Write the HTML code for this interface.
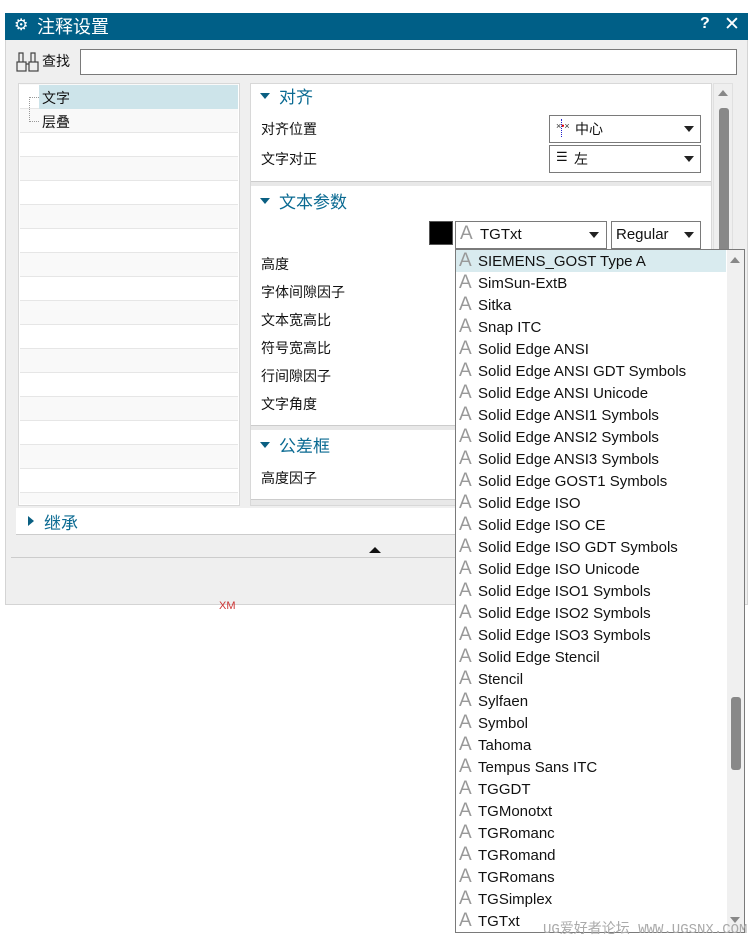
<!DOCTYPE html>
<html><head><meta charset="utf-8"><style>
*{margin:0;padding:0;box-sizing:border-box}
body{width:755px;height:940px;background:#fff;position:relative;overflow:hidden;font-family:"Liberation Sans","Noto Sans CJK SC",sans-serif;font-size:14px;color:#111}
.a{position:absolute}
.cn{font-family:"Noto Sans CJK SC",sans-serif}
.hd{color:#0a6a92;font-size:17px}
.tri{width:0;height:0;border-left:5px solid transparent;border-right:5px solid transparent;border-top:6px solid #0a5f82}
.dd{background:#fff;border:1px solid #7a7a7a}
.dt{width:0;height:0;border-left:5px solid transparent;border-right:5px solid transparent;border-top:6px solid #222}
.fi{position:absolute;left:458px;height:22px;line-height:22px;font-size:15px;color:#111;white-space:nowrap}
.fi b{font-weight:normal;color:#999;font-size:19px;display:inline-block;width:20px;padding-left:1px}
</style></head><body>
<div class="a" style="left:5px;top:13px;width:743px;height:592px;background:#efefef;border:1px solid #d4d4d4"></div>
<div class="a" style="left:5px;top:13px;width:743px;height:27px;background:#005f87"></div>
<div class="a" style="left:14px;top:15px;color:#fff;font-size:16px">⚙</div>
<div class="a cn" style="left:37px;top:13px;color:#fff;font-size:18px;line-height:26px">注释设置</div>
<div class="a" style="left:700px;top:15px;color:#fff;font-size:16px;font-weight:bold">?</div>
<div class="a" style="left:724px;top:13px;color:#fff;font-size:19px">✕</div>
<svg class="a" style="left:16px;top:50px" width="26" height="22" viewBox="0 0 26 22"><g fill="none" stroke="#444" stroke-width="1.2"><rect x="1" y="12" width="9" height="9"/><rect x="13" y="12" width="9" height="9"/><path d="M3 12V3h4v9M15 12V3h4v9M10 14h3"/></g></svg>
<div class="a cn" style="left:42px;top:51px;font-size:14px">查找</div>
<div class="a" style="left:80px;top:49px;width:657px;height:26px;background:#fff;border:1px solid #7a7a7a"></div>
<div class="a" style="left:18px;top:83px;width:222px;height:423px;background:#fff;border:1px solid #d8d8d8"></div>
<div class="a" style="left:20px;top:84px;width:218px;height:420px;background:repeating-linear-gradient(#fff 0 23px,#e6e6e6 23px 24px,#f9f9f9 24px 47px,#e6e6e6 47px 48px);background-position:0 1px"></div>
<div class="a" style="left:39px;top:85px;width:199px;height:24px;background:#cde4ea"></div>
<div class="a" style="left:29px;top:97px;width:1px;height:25px;border-left:1px dotted #999"></div>
<div class="a" style="left:29px;top:97px;width:10px;border-top:1px dotted #999"></div>
<div class="a" style="left:29px;top:121px;width:10px;border-top:1px dotted #999"></div>
<div class="a cn" style="left:42px;top:88px">文字</div>
<div class="a cn" style="left:42px;top:112px">层叠</div>
<div class="a" style="left:250px;top:83px;width:462px;height:423px;background:#e8e8e8;border:1px solid #d8d8d8"></div>
<div class="a" style="left:251px;top:84px;width:460px;height:98px;background:#fff;border-bottom:1px solid #ccc"></div>
<div class="a" style="left:251px;top:186px;width:460px;height:240px;background:#fff;border-bottom:1px solid #ccc"></div>
<div class="a" style="left:251px;top:430px;width:460px;height:70px;background:#fff;border-bottom:1px solid #ccc"></div>
<div class="a tri" style="left:260px;top:93px"></div><div class="a cn hd" style="left:279px;top:83px">对齐</div>
<div class="a tri" style="left:260px;top:198px"></div><div class="a cn hd" style="left:279px;top:188px">文本参数</div>
<div class="a tri" style="left:260px;top:442px"></div><div class="a cn hd" style="left:279px;top:432px">公差框</div>
<div class="a cn" style="left:261px;top:119px">对齐位置</div>
<div class="a cn" style="left:261px;top:149px">文字对正</div>
<div class="a cn" style="left:261px;top:254px">高度</div>
<div class="a cn" style="left:261px;top:282px">字体间隙因子</div>
<div class="a cn" style="left:261px;top:310px">文本宽高比</div>
<div class="a cn" style="left:261px;top:338px">符号宽高比</div>
<div class="a cn" style="left:261px;top:366px">行间隙因子</div>
<div class="a cn" style="left:261px;top:394px">文字角度</div>
<div class="a cn" style="left:261px;top:468px">高度因子</div>
<div class="a dd" style="left:549px;top:115px;width:152px;height:28px"></div>
<div class="a" style="left:556px;top:121px;font-size:9px;color:#333">×<span style="color:#d00">•</span>×</div>
<div class="a" style="left:561px;top:119px;width:1px;height:18px;border-left:1px dotted #22c"></div>
<div class="a cn" style="left:575px;top:119px">中心</div>
<div class="a dt" style="left:684px;top:126px"></div>
<div class="a dd" style="left:549px;top:145px;width:152px;height:28px"></div>
<div class="a" style="left:556px;top:149px;font-size:13px">☰</div>
<div class="a cn" style="left:574px;top:149px">左</div>
<div class="a dt" style="left:684px;top:156px"></div>
<div class="a" style="left:429px;top:221px;width:24px;height:24px;background:#000;border:1px solid #555"></div>
<div class="a dd" style="left:455px;top:221px;width:152px;height:28px"></div>
<div class="a" style="left:460px;top:223px;font-size:19px;color:#999">A</div>
<div class="a" style="left:480px;top:226px;font-size:15px">TGTxt</div>
<div class="a dt" style="left:589px;top:232px"></div>
<div class="a dd" style="left:611px;top:221px;width:90px;height:28px"></div>
<div class="a" style="left:616px;top:226px;font-size:15px">Regular</div>
<div class="a dt" style="left:684px;top:232px"></div>
<div class="a" style="left:713px;top:83px;width:20px;height:423px;background:#efefef;border:1px solid #e0e0e0"></div>
<div class="a" style="left:718px;top:90px;border-left:5px solid transparent;border-right:5px solid transparent;border-bottom:6px solid #888"></div>
<div class="a" style="left:719px;top:108px;width:10px;height:150px;background:#888;border-radius:3px"></div>
<div class="a" style="left:16px;top:508px;width:700px;height:27px;background:#fff;border-bottom:1px solid #ccc"></div>
<div class="a" style="left:28px;top:516px;border-top:5px solid transparent;border-bottom:5px solid transparent;border-left:6px solid #0a5f82"></div>
<div class="a cn hd" style="left:44px;top:509px">继承</div>
<div class="a" style="left:369px;top:547px;border-left:6px solid transparent;border-right:6px solid transparent;border-bottom:6px solid #111"></div>
<div class="a" style="left:11px;top:557px;width:700px;border-top:1px solid #ccc"></div>
<div class="a" style="left:219px;top:600px;font-size:11px;color:#c33">XM</div>
<div class="a" style="left:455px;top:249px;width:290px;height:684px;background:#fff;border:1px solid #7a7a7a"></div>
<div class="a" style="left:456px;top:250px;width:270px;height:22px;background:#d9ebef"></div>
<div class="a" style="left:727px;top:250px;width:17px;height:682px;background:#f0f0f0"></div>
<div class="a" style="left:730px;top:257px;border-left:5px solid transparent;border-right:5px solid transparent;border-bottom:6px solid #888"></div>
<div class="a" style="left:730px;top:917px;border-left:5px solid transparent;border-right:5px solid transparent;border-top:6px solid #888"></div>
<div class="a" style="left:731px;top:697px;width:10px;height:73px;background:#888;border-radius:3px"></div>
<div class="fi" style="top:250px"><b>A</b>SIEMENS_GOST Type A</div>
<div class="fi" style="top:272px"><b>A</b>SimSun-ExtB</div>
<div class="fi" style="top:294px"><b>A</b>Sitka</div>
<div class="fi" style="top:316px"><b>A</b>Snap ITC</div>
<div class="fi" style="top:338px"><b>A</b>Solid Edge ANSI</div>
<div class="fi" style="top:360px"><b>A</b>Solid Edge ANSI GDT Symbols</div>
<div class="fi" style="top:382px"><b>A</b>Solid Edge ANSI Unicode</div>
<div class="fi" style="top:404px"><b>A</b>Solid Edge ANSI1 Symbols</div>
<div class="fi" style="top:426px"><b>A</b>Solid Edge ANSI2 Symbols</div>
<div class="fi" style="top:448px"><b>A</b>Solid Edge ANSI3 Symbols</div>
<div class="fi" style="top:470px"><b>A</b>Solid Edge GOST1 Symbols</div>
<div class="fi" style="top:492px"><b>A</b>Solid Edge ISO</div>
<div class="fi" style="top:514px"><b>A</b>Solid Edge ISO CE</div>
<div class="fi" style="top:536px"><b>A</b>Solid Edge ISO GDT Symbols</div>
<div class="fi" style="top:558px"><b>A</b>Solid Edge ISO Unicode</div>
<div class="fi" style="top:580px"><b>A</b>Solid Edge ISO1 Symbols</div>
<div class="fi" style="top:602px"><b>A</b>Solid Edge ISO2 Symbols</div>
<div class="fi" style="top:624px"><b>A</b>Solid Edge ISO3 Symbols</div>
<div class="fi" style="top:646px"><b>A</b>Solid Edge Stencil</div>
<div class="fi" style="top:668px"><b>A</b>Stencil</div>
<div class="fi" style="top:690px"><b>A</b>Sylfaen</div>
<div class="fi" style="top:712px"><b>A</b>Symbol</div>
<div class="fi" style="top:734px"><b>A</b>Tahoma</div>
<div class="fi" style="top:756px"><b>A</b>Tempus Sans ITC</div>
<div class="fi" style="top:778px"><b>A</b>TGGDT</div>
<div class="fi" style="top:800px"><b>A</b>TGMonotxt</div>
<div class="fi" style="top:822px"><b>A</b>TGRomanc</div>
<div class="fi" style="top:844px"><b>A</b>TGRomand</div>
<div class="fi" style="top:866px"><b>A</b>TGRomans</div>
<div class="fi" style="top:888px"><b>A</b>TGSimplex</div>
<div class="fi" style="top:910px"><b>A</b>TGTxt</div>
<div class="a cn" style="left:543px;top:918px;font-size:14px;color:#aaa;font-family:'Liberation Mono','Noto Sans CJK SC',monospace;white-space:nowrap">UG爱好者论坛 WWW.UGSNX.COM</div>
</body></html>
